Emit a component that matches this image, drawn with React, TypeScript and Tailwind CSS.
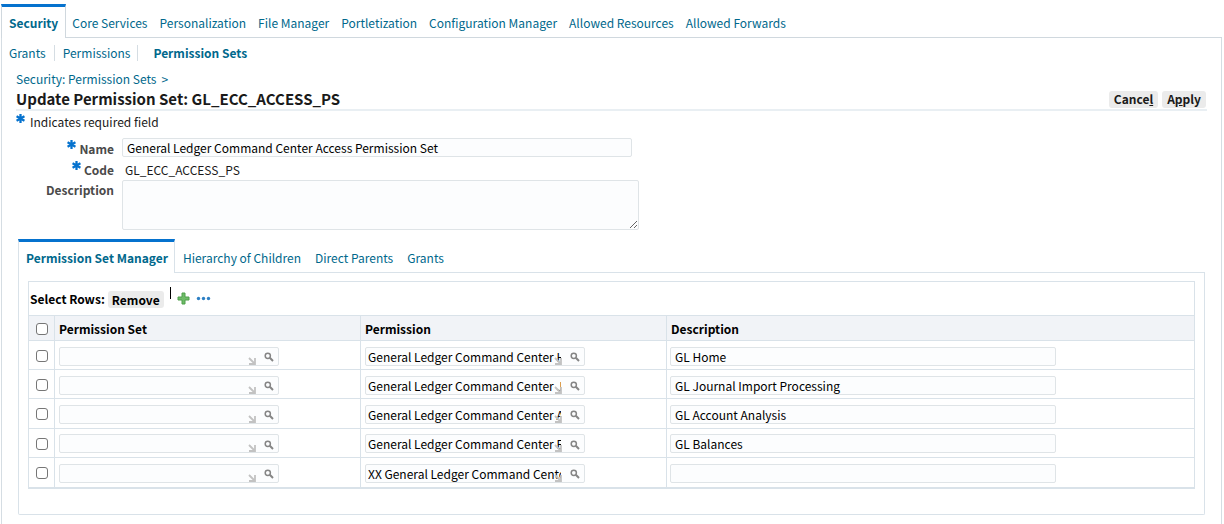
import React from "react";

const mainTabs = [
  "Core Services",
  "Personalization",
  "File Manager",
  "Portletization",
  "Configuration Manager",
  "Allowed Resources",
  "Allowed Forwards",
];

const rows = [
  { permission: "General Ledger Command Center Home", description: "GL Home" },
  { permission: "General Ledger Command Center Journal Import", description: "GL Journal Import Processing" },
  { permission: "General Ledger Command Center Account Analysis", description: "GL Account Analysis" },
  { permission: "General Ledger Command Center Balances", description: "GL Balances" },
  { permission: "XX General Ledger Command Center", description: "" },
];

function Required() {
  return (
    <svg viewBox="0 0 10 10" className="size-[9px] shrink-0" aria-hidden="true">
      <g stroke="#0572ce" strokeWidth="2.5" strokeLinecap="butt">
        <path d="M5 0v10M0.6 2.5l8.8 5M9.4 2.5l-8.8 5" />
      </g>
    </svg>
  );
}

function SearchIcon() {
  return (
    <svg viewBox="0 0 10 10" className="size-[10px]" fill="none" stroke="#858585" aria-hidden="true">
      <circle cx="3.8" cy="3.8" r="2.6" strokeWidth="1.5" />
      <path d="M5.8 5.8L9 9" strokeWidth="2" />
    </svg>
  );
}

function Lookup({ label, value }: { label: string; value: string }) {
  return (
    <div className="relative flex h-[19px] w-[220px] items-center rounded-xs border border-[#dfe4e7] bg-[#fcfdfe]">
      <input
        type="text"
        aria-label={label}
        defaultValue={value}
        className="h-full w-[195px] bg-transparent pl-[2px] text-black outline-none"
      />
      <svg
        viewBox="0 0 8 8"
        className="absolute bottom-0 left-[188px] size-2"
        fill="none"
        stroke="#c2c2c2"
        strokeWidth="1.8"
        aria-hidden="true"
      >
        <path d="M1 1l5 5M7 1v6H1" />
      </svg>
      <button type="button" aria-label={"Search " + label} className="ml-[9px] flex pt-[2px]">
        <SearchIcon />
      </button>
    </div>
  );
}

function Tick({ label }: { label: string }) {
  return (
    <input
      type="checkbox"
      aria-label={label}
      className="block size-3 appearance-none rounded-[3px] border border-[#767676] bg-white checked:bg-[#0572ce]"
    />
  );
}

const cell = "border-b border-l border-[#d9e2e9] pt-[2px] pl-1 text-left";

export default function App() {
  return (
    <div className="bg-white pt-1 pr-[2px] pl-px font-['Noto_Sans_CJK_SC','Noto_Sans',sans-serif] text-[12px] leading-4 text-[#1a1a1a]">
      <nav aria-label="Main" className="flex h-[34px] text-[#00688c]">
        <a
          href="#security"
          className="flex items-center border-x border-t-3 border-x-[#d0d8de] border-t-[#0572ce] px-[7px] pt-px font-bold"
        >
          Security
        </a>
        <div className="flex grow items-center gap-3 border-b border-[#d0d8de] pt-1 pl-[6px]">
          {mainTabs.map((t) => (
            <a key={t} href="#tab" className="whitespace-nowrap">
              {t}
            </a>
          ))}
        </div>
      </nav>

      <div className="border-x border-[#d5dde3] pb-[9px]">
        <nav aria-label="Security" className="flex h-[31px] items-center pb-[2px] pl-[7px] text-[#00688c]">
          <a href="#grants">Grants</a>
          <a href="#permissions" className="ml-2 border-l border-[#d5dde3] pl-2">
            Permissions
          </a>
          <a href="#sets" className="ml-[7px] border-l border-[#d5dde3] pl-[15px] font-bold">
            Permission Sets
          </a>
        </nav>

        <main className="pr-[14px] pl-[14px]">
          <div className="flex h-5 items-center gap-[5px] text-[#00688c]">
            <a href="#crumb">Security: Permission Sets</a>
            <span>&gt;</span>
          </div>

          <div className="flex h-[22px] items-center justify-between border-b-2 border-[#e9eff3]">
            <h1 className="text-[15px] font-bold">Update Permission Set: GL_ECC_ACCESS_PS</h1>
            <div className="flex gap-1 pr-px font-bold">
              <button type="button" className="h-[17px] rounded-[3px] bg-[#ebebeb] px-[5px]">
                Cance<u>l</u>
              </button>
              <button type="button" className="h-[17px] rounded-[3px] bg-[#ebebeb] px-[5px]">
                A<u>p</u>ply
              </button>
            </div>
          </div>

          <div className="flex h-[22px] items-center gap-[5px]">
            <span className="mb-2">
              <Required />
            </span>
            Indicates required field
          </div>

          <div className="grid grid-cols-[98px_1fr] gap-x-2 pt-[5px]">
            <label htmlFor="name" className="flex h-[21px] items-center justify-end gap-[3px] font-bold text-[#4a4a4a]">
              <span className="mb-2">
                <Required />
              </span>
              Name
            </label>
            <input
              id="name"
              type="text"
              defaultValue="General Ledger Command Center Access Permission Set"
              className="h-[19px] w-[510px] rounded-xs border border-[#dfe4e7] bg-[#fcfdfe] px-1 text-black"
            />
            <span className="flex h-[21px] items-center justify-end gap-[3px] font-bold text-[#4a4a4a]">
              <span className="mb-2">
                <Required />
              </span>
              Code
            </span>
            <span className="flex items-center pl-[3px]">GL_ECC_ACCESS_PS</span>
            <label htmlFor="description" className="pt-[2px] text-right font-bold text-[#4a4a4a]">
              Description
            </label>
            <textarea
              id="description"
              className="block h-[50px] w-[517px] rounded-xs border border-[#dfe4e7] bg-[#fcfdfe]"
            />
          </div>

          <section className="mt-[9px] mr-[2px] ml-[2px]">
            <nav aria-label="Permission set" className="flex h-[34px] text-[#00688c]">
              <a
                href="#manager"
                className="flex items-center border-x border-t-3 border-x-[#d9e2e9] border-t-[#0572ce] px-[6px] pt-px pl-[7px] font-bold whitespace-nowrap"
              >
                Permission Set Manager
              </a>
              <div className="flex grow items-center gap-[14px] border-b border-[#d9e2e9] pt-1 pl-2">
                <a href="#children">Hierarchy of Children</a>
                <a href="#parents">Direct Parents</a>
                <a href="#set-grants">Grants</a>
              </div>
            </nav>

            <div className="rounded-b-xs border-x border-b border-[#d9e2e9] px-[9px] pt-2 pb-[25px]">
              <div className="border border-b-2 border-[#d9e2e9]">
                <div className="flex h-[33px] items-center pl-px font-bold text-black">
                  Select Rows:
                  <button type="button" className="mt-[2px] ml-[3px] h-[17px] rounded-[3px] bg-[#ebebeb] px-1">
                    Remove
                  </button>
                  <span className="mb-3 ml-[6px] h-3 w-px bg-black" />
                  <button type="button" aria-label="Add row" className="ml-[6px] flex">
                    <svg viewBox="0 0 13 13" className="size-[13px]" aria-hidden="true">
                      <path
                        d="M5 1h3v4h4v3H8v4H5V8H1V5h4z"
                        fill="#6fbb68"
                        stroke="#4fa04b"
                        strokeWidth="1"
                        strokeLinejoin="round"
                      />
                    </svg>
                  </button>
                  <button type="button" aria-label="More actions" className="ml-[6px] flex">
                    <svg viewBox="0 0 15 5" className="h-[5px] w-[15px]" fill="#2e80c4" aria-hidden="true">
                      <circle cx="2.5" cy="2.5" r="1.7" />
                      <circle cx="7.5" cy="2.5" r="1.7" />
                      <circle cx="12.5" cy="2.5" r="1.7" />
                    </svg>
                  </button>
                </div>

                <table className="h-[172px] w-full table-fixed border-separate border-spacing-0">
                  <colgroup>
                    <col className="w-[25px]" />
                    <col className="w-[306px]" />
                    <col className="w-[306px]" />
                    <col />
                  </colgroup>
                  <thead className="bg-[#f1f3f7] text-black">
                    <tr className="h-[26px]">
                      <th className="border-y border-[#d9e2e9] pt-[2px] pl-[7px]">
                        <Tick label="Select all rows" />
                      </th>
                      <th className={cell + " border-t"}>Permission Set</th>
                      <th className={cell + " border-t"}>Permission</th>
                      <th className={cell + " border-t"}>Description</th>
                    </tr>
                  </thead>
                  <tbody className="[&>tr:last-child>td]:border-b-0">
                    {rows.map((r) => (
                      <tr key={r.permission} className="h-[29px]">
                        <td className="border-b border-[#d9e2e9] pt-[2px] pl-[7px]">
                          <Tick label={"Select " + r.permission} />
                        </td>
                        <td className={cell}>
                          <Lookup label="Permission Set" value="" />
                        </td>
                        <td className={cell}>
                          <Lookup label="Permission" value={r.permission} />
                        </td>
                        <td className="border-b border-l border-[#d9e2e9] pt-[2px] pl-[3px]">
                          <input
                            type="text"
                            aria-label="Description"
                            defaultValue={r.description}
                            className="block h-[19px] w-[386px] max-w-full rounded-xs border border-[#dfe4e7] bg-[#fcfdfe] px-1 text-black"
                          />
                        </td>
                      </tr>
                    ))}
                  </tbody>
                </table>
              </div>
            </div>
          </section>
        </main>
      </div>
    </div>
  );
}
